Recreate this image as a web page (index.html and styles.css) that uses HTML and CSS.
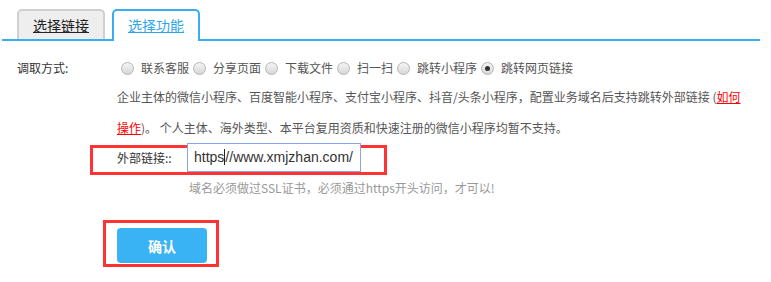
FILE: index.html
```html
<!DOCTYPE html>
<html lang="zh-CN">
<head>
    <meta charset="UTF-8">
    <meta name="viewport" content="width=device-width, initial-scale=1.0">
    <title>选择功能</title>
    <link rel="stylesheet" href="styles.css">
</head>
<body>
    <div class="mark mark-url"></div>
    <div class="mark mark-btn"></div>

    <div class="tabs">
        <a class="tab" href="#">选择链接</a>
        <a class="tab active" href="#">选择功能</a>
    </div>

    <div class="form">
        <div class="row-type">
            <div class="row-label">调取方式:</div>
            <div class="options">
                <label class="option"><span class="radio"></span>联系客服</label>
                <label class="option"><span class="radio"></span>分享页面</label>
                <label class="option"><span class="radio"></span>下载文件</label>
                <label class="option"><span class="radio"></span>扫一扫</label>
                <label class="option"><span class="radio"></span>跳转小程序</label>
                <label class="option"><span class="radio checked"></span>跳转网页链接</label>
            </div>
        </div>

        <div class="body">
            <p class="desc">企业主体的微信小程序、百度智能小程序、支付宝小程序、抖音/头条小程序，配置业务域名后支持跳转外部链接 (<a href="#">如何操作</a>)。 个人主体、海外类型、本平台复用资质和快速注册的微信小程序均暂不支持。</p>

            <div class="url-row">
                <div class="url-label">外部链接::</div>
                <div class="url-input">https<span class="caret"></span>//www.xmjzhan.com/</div>
            </div>
            <div class="hint">域名必须做过SSL证书，必须通过https开头访问，才可以!</div>

            <button class="btn">确认</button>
        </div>
    </div>
</body>
</html>
```

FILE: styles.css
```css
body {
    margin: 0;
    font-family: "Noto Sans CJK SC", "Liberation Sans", sans-serif;
    font-size: 12px;
    color: #555;
    background-color: #fff;
}
.tabs {
    display: flex;
    align-items: flex-end;
    gap: 7px;
    width: 743px;
    margin-left: 2px;
    padding: 9px 0 0 15px;
    border-bottom: 2px solid #38aef0;
}
.tab {
    display: block;
    width: 84px;
    height: 28px;
    line-height: 28px;
    text-align: center;
    font-size: 14px;
    color: #222;
    text-decoration: underline;
    background-color: #eee;
    border: 2px solid #d0d0d0;
    border-bottom: none;
    border-radius: 5px 5px 0 0;
}
.tab.active {
    height: 30px;
    margin-bottom: -2px;
    color: #2ea6ea;
    background-color: #fff;
    border-color: #38aef0;
}
.form {
    padding-left: 17px;
}
.row-type {
    display: flex;
    height: 20px;
    line-height: 20px;
    margin-top: 17px;
}
.row-label {
    width: 100px;
    color: #333;
}
.options {
    display: flex;
    align-items: center;
}
.option {
    display: flex;
    align-items: center;
    color: #555;
}
.radio {
    box-sizing: border-box;
    width: 13px;
    height: 13px;
    margin: 0 7px 0 4px;
    border: 1px solid #b5b5b5;
    border-radius: 50%;
    background: linear-gradient(#f4f4f4, #d8d8d8);
    position: relative;
}
.radio.checked::after {
    content: "";
    position: absolute;
    left: 3px;
    top: 3px;
    width: 5px;
    height: 5px;
    border-radius: 50%;
    background-color: #333;
}
.body {
    padding-left: 100px;
}
.desc {
    width: 632px;
    margin: 3px 0 0;
    line-height: 31px;
    color: #555;
}
.desc a {
    color: #f00;
}
.url-row {
    display: flex;
    align-items: center;
}
.url-label {
    width: 70px;
    color: #333;
}
.url-input {
    position: relative;
    box-sizing: border-box;
    width: 174px;
    height: 29px;
    line-height: 27px;
    padding-left: 6px;
    border: 1px solid #86a6e6;
    background-color: #fff;
    font-family: "Liberation Sans", Arial, sans-serif;
    font-size: 14px;
    color: #333;
}
.caret {
    display: inline-block;
    width: 1px;
    height: 16px;
    vertical-align: -3px;
    background-color: #222;
}
.hint {
    margin: 6px 0 0 72px;
    line-height: 20px;
    color: #999;
}
.btn {
    display: block;
    width: 90px;
    height: 35px;
    margin-top: 30px;
    border: none;
    border-radius: 4px;
    background-color: #3ab3f4;
    color: #fff;
    font-family: inherit;
    font-size: 14px;
    font-weight: bold;
}
.mark {
    position: absolute;
    box-sizing: border-box;
    border: 3px solid #f33;
}
.mark-url {
    left: 90px;
    top: 145px;
    width: 297px;
    height: 30px;
}
.mark-btn {
    left: 103px;
    top: 220px;
    width: 116px;
    height: 47px;
}
```
